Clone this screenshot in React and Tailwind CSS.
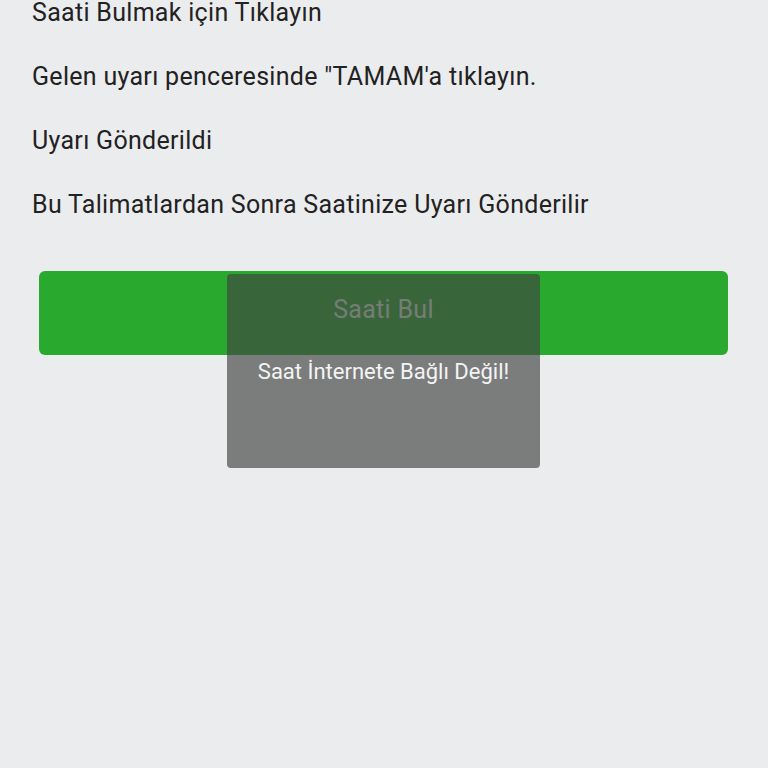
export default function App() {
  const font = { fontFamily: "Roboto, 'Noto Sans', sans-serif" };
  return (
    <div className="relative w-[768px] h-[768px] overflow-hidden bg-[#ebecee]" style={font}>
      <div className="flex flex-col gap-9 px-8 -mt-px text-[25px] leading-[28px] tracking-[0.3px] text-[#222222]">
        <p>Saati Bulmak için Tıklayın</p>
        <p>Gelen uyarı penceresinde "TAMAM'a tıklayın.</p>
        <p>Uyarı Gönderildi</p>
        <p>Bu Talimatlardan Sonra Saatinize Uyarı Gönderilir</p>
      </div>
      <div className="mt-[52px] ml-[39px] mr-[40px]">
        <button className="w-full h-[84px] rounded-[6px] bg-[#2aa92f] text-[25px] tracking-[0.3px] text-[#dceedc] flex items-center justify-center pb-[6px]">
          Saati Bul
        </button>
      </div>
      <div className="absolute left-[227px] top-[274px] w-[313px] h-[194px] rounded-[4px] bg-[#424242]/[0.66] flex justify-center pt-[85px]">
        <span className="text-[22px] leading-[26px] text-[#f4f4f4]">Saat İnternete Bağlı Değil!</span>
      </div>
    </div>
  );
}
